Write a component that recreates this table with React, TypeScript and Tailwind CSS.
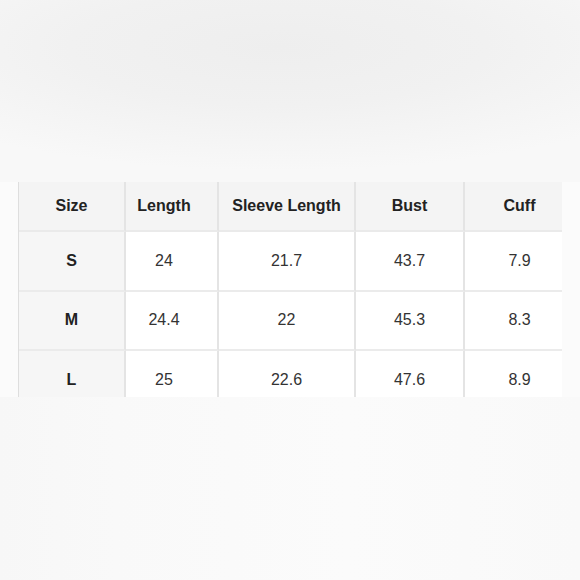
const HEADERS = ["Size", "Length", "Sleeve Length", "Bust", "Cuff"];

const ROWS = [
  ["S", "24", "21.7", "43.7", "7.9"],
  ["M", "24.4", "22", "45.3", "8.3"],
  ["L", "25", "22.6", "47.6", "8.9"],
];

// per-column nudges so the text sits where it does in the chart
const COL_PAD = ["", "pr-[15px]", "", "", "pl-[12px]"];

export default function App() {
  return (
    <div
      className="flex h-[580px] w-[580px] flex-col overflow-hidden bg-[#f9f9f9]"
      style={{ fontFamily: '"Liberation Sans", Arial, sans-serif' }}
    >
      <div className="h-[182px] bg-[radial-gradient(ellipse_90%_80%_at_48%_26%,#eeeeee_0%,#f1f1f1_40%,#f8f8f8_85%)]" />

      <div className="flex h-[215px] bg-[#fbfbfb]">
        <div className="w-[18px]" />
        <div className="h-[215px] overflow-hidden border-l border-[#dedede]">
          <div className="grid grid-cols-[107px_93px_137px_109px_97px]">
            {HEADERS.map((h, i) => (
              <div
                key={h}
                className={`flex h-[50px] items-center justify-center border-b-2 border-b-[#eaeaea] bg-[#f4f4f4] text-[16px] font-bold text-[#222] ${
                  i < 4 ? "border-r-2 border-r-[#e4e4e4]" : ""
                } ${COL_PAD[i]}`}
              >
                {h}
              </div>
            ))}
            {ROWS.map((row) =>
              row.map((v, i) => (
                <div
                  key={row[0] + i}
                  className={`flex h-[59.5px] items-center justify-center border-b-2 border-b-[#ebebeb] text-[16px] ${
                    i === 0 ? "bg-[#f6f6f6] font-bold text-[#222]" : "bg-white text-[#333]"
                  } ${i < 4 ? "border-r-2 border-r-[#e4e4e4]" : ""} ${COL_PAD[i]}`}
                >
                  {v}
                </div>
              ))
            )}
          </div>
        </div>
        <div className="flex-1" />
      </div>

      <div className="flex-1 bg-[linear-gradient(90deg,#f7f7f7_0%,#f9f9f9_20%,#fbfbfb_60%,#f9f9f9_100%)]" />
    </div>
  );
}
